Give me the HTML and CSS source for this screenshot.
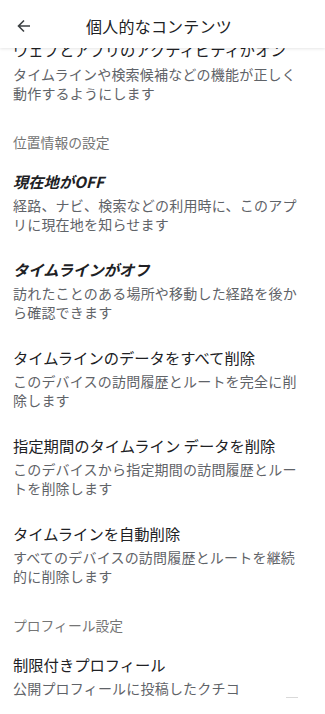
FILE: index.html
```html
<!DOCTYPE html>
<html lang="ja">
<head>
<meta charset="utf-8">
<meta name="viewport" content="width=device-width, initial-scale=1">
<title>個人的なコンテンツ</title>
<link rel="stylesheet" href="styles.css">
</head>
<body>
<div class="screen">
  <header class="topbar">
    <span class="back" aria-label="戻る">
      <svg width="14" height="14" viewBox="0 0 14 14"><path d="M13 7H1.8M7 1.5 1.5 7 7 12.5" fill="none" stroke="#3c4043" stroke-width="1.6"/></svg>
    </span>
    <h1 class="title">個人的なコンテンツ</h1>
  </header>
  <main class="list">
    <div class="item first">
      <div class="item-title">ウェブとアプリのアクティビティがオン</div>
      <div class="item-desc">タイムラインや検索候補などの機能が正しく動作するようにします</div>
    </div>
    <div class="section">位置情報の設定</div>
    <div class="item">
      <div class="item-title strong">現在地がOFF</div>
      <div class="item-desc">経路、ナビ、検索などの利用時に、このアプリに現在地を知らせます</div>
    </div>
    <div class="item">
      <div class="item-title strong">タイムラインがオフ</div>
      <div class="item-desc">訪れたことのある場所や移動した経路を後から確認できます</div>
    </div>
    <div class="item">
      <div class="item-title">タイムラインのデータをすべて削除</div>
      <div class="item-desc">このデバイスの訪問履歴とルートを完全に削除します</div>
    </div>
    <div class="item">
      <div class="item-title">指定期間のタイムライン データを削除</div>
      <div class="item-desc">このデバイスから指定期間の訪問履歴とルートを削除します</div>
    </div>
    <div class="item">
      <div class="item-title">タイムラインを自動削除</div>
      <div class="item-desc">すべてのデバイスの訪問履歴とルートを継続的に削除します</div>
    </div>
    <div class="section">プロフィール設定</div>
    <div class="item">
      <div class="item-title">制限付きプロフィール</div>
      <div class="item-desc">公開プロフィールに投稿したクチコ</div>
    </div>
  </main>
  <div class="scroll-hint"></div>
</div>
</body>
</html>
```
FILE: styles.css
```css
html, body {
  margin: 0;
  padding: 0;
  background: #ffffff;
}
body {
  font-family: "Noto Sans CJK JP", "Noto Sans", sans-serif;
  color: #202124;
}
.screen {
  position: relative;
  width: 325px;
  height: 714px;
  overflow: hidden;
  background: #fff;
}
.topbar {
  position: absolute;
  top: 0;
  left: 0;
  right: 0;
  height: 48px;
  background: #fff;
  display: flex;
  align-items: center;
  box-shadow: 0 1px 3px rgba(0,0,0,0.10);
  z-index: 2;
}
.back {
  position: absolute;
  left: 17px;
  top: 19px;
  width: 14px;
  height: 14px;
  display: flex;
}
.title {
  flex: 1;
  margin: 0;
  padding-right: 7px;
  text-align: center;
  font-size: 16px;
  letter-spacing: 0.2px;
  font-weight: 400;
  line-height: 22px;
  margin-top: 4px;
  color: #202124;
}
.list {
  padding-top: 26px;
}
.item {
  padding: 12px 20px 13px 13px;
}
.item.first .item-title {
  margin-bottom: 5px;
}
.item-title {
  font-size: 15.3px;
  line-height: 22px;
  margin-bottom: 4px;
  color: #202124;
  white-space: nowrap;
}
.item-title.strong {
  font-weight: 700;
  font-style: italic;
}
.item-desc {
  font-size: 14px;
  letter-spacing: 0.2px;
  line-height: 18.5px;
  color: #5f6368;
}
.section {
  padding: 17px 13px 6px;
  font-size: 13.8px;
  line-height: 20px;
  color: #757575;
}
.scroll-hint {
  position: absolute;
  left: 286px;
  top: 697px;
  width: 12px;
  height: 1px;
  background: #d9d9d9;
}
```
